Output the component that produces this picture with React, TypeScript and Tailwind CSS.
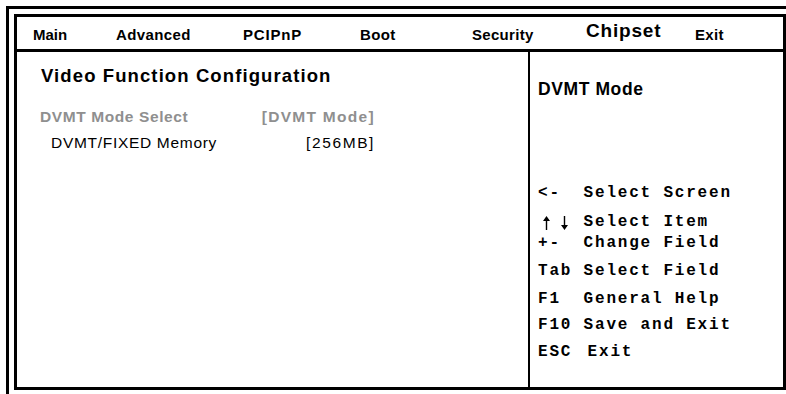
import React from 'react';

const TABS: { label: string; w: string; cls: string }[] = [
  { label: 'Main', w: 'w-[83px]', cls: 'pt-[10px] text-[15px] leading-[16px]' },
  { label: 'Advanced', w: 'w-[127px]', cls: 'pt-[10px] text-[15px] leading-[16px] tracking-[0.4px]' },
  { label: 'PCIPnP', w: 'w-[117px]', cls: 'pt-[10px] text-[15px] leading-[16px] tracking-[0.8px]' },
  { label: 'Boot', w: 'w-[112px]', cls: 'pt-[10px] text-[15px] leading-[16px] tracking-[0.4px]' },
  { label: 'Security', w: 'w-[114px]', cls: 'pt-[10px] text-[15px] leading-[16px] tracking-[0.3px]' },
  { label: 'Chipset', w: 'w-[109px]', cls: 'pt-[4px] text-[19px] leading-[20px] tracking-[0.8px]' },
  { label: 'Exit', w: 'w-[60px]', cls: 'pt-[10px] text-[15px] leading-[16px] tracking-[0.3px]' },
];

const HelpLine: React.FC<{ h: string; children: React.ReactNode }> = ({ h, children }) => (
  <div className={`flex whitespace-pre ${h}`}>{children}</div>
);

const Arrow: React.FC<{ down?: boolean }> = ({ down }) => (
  <svg width="7" height="14" viewBox="0 0 7 14" className={down ? 'rotate-180' : ''}>
    <path d="M3.5 0 L7 5 L4.2 5 L4.2 14 L2.8 14 L2.8 5 L0 5 Z" fill="#000" />
  </svg>
);

export default function App() {
  return (
    <div className="h-[394px] w-[786px] overflow-hidden bg-white font-['Liberation_Sans',Arial,sans-serif] text-black">
      <div className="ml-[6px] mt-[6px] h-[388px] border-l-[3px] border-t-[3px] border-black pl-[5px] pt-[5px]">
        <div className="flex h-[376px] w-[772px] flex-col border-[3px] border-black">
          {/* Menu bar */}
          <div className="flex h-[35px] shrink-0 border-b-[3px] border-black pl-[16px] font-bold">
            {TABS.map((t) => (
              <div key={t.label} className={`${t.w} shrink-0 ${t.cls}`}>
                {t.label}
              </div>
            ))}
          </div>

          <div className="flex flex-1">
            {/* Settings */}
            <div className="w-[513px] shrink-0 border-r-[2px] border-black pl-[24px] pt-[13px]">
              <h1 className="text-[18.5px] font-bold leading-[22px] tracking-[1.1px]">Video Function Configuration</h1>
              <div className="mt-[21px] flex w-[334px] justify-between text-[15.5px] font-bold leading-[18px] text-[#8f8f8f]">
                <span className="-ml-px tracking-[0.6px]">DVMT Mode Select</span>
                <span className="tracking-[1.3px]">[DVMT Mode]</span>
              </div>
              <div className="mt-[8px] flex w-[334px] justify-between text-[15.5px] leading-[18px]">
                <span className="pl-[10px] tracking-[0.7px]">DVMT/FIXED Memory</span>
                <span className="tracking-[1.6px]">[256MB]</span>
              </div>
            </div>

            {/* Help */}
            <div className="flex-1 pl-[8px] pt-[27px]">
              <h2 className="text-[17.5px] font-bold leading-[20px] tracking-[0.6px]">DVMT Mode</h2>
              <div className="mt-[84px] font-['Liberation_Mono','Courier_New',monospace] text-[16px] font-bold leading-[20px] tracking-[1.8px]">
                <HelpLine h="h-[29px]">{'<-  Select Screen'}</HelpLine>
                <HelpLine h="h-[21px]">
                  <span className="flex w-[45.6px] items-start gap-[11px] pl-[5px] pt-[4px]">
                    <Arrow />
                    <Arrow down />
                  </span>
                  Select Item
                </HelpLine>
                <HelpLine h="h-[28px]">{'+-  Change Field'}</HelpLine>
                <HelpLine h="h-[28px]">Tab Select Field</HelpLine>
                <HelpLine h="h-[26px]">{'F1  General Help'}</HelpLine>
                <HelpLine h="h-[27px]">F10 Save and Exit</HelpLine>
                <HelpLine h="h-[20px]">
                  {'ESC '}
                  <span className="ml-[4px]">Exit</span>
                </HelpLine>
              </div>
            </div>
          </div>
        </div>
      </div>
    </div>
  );
}
